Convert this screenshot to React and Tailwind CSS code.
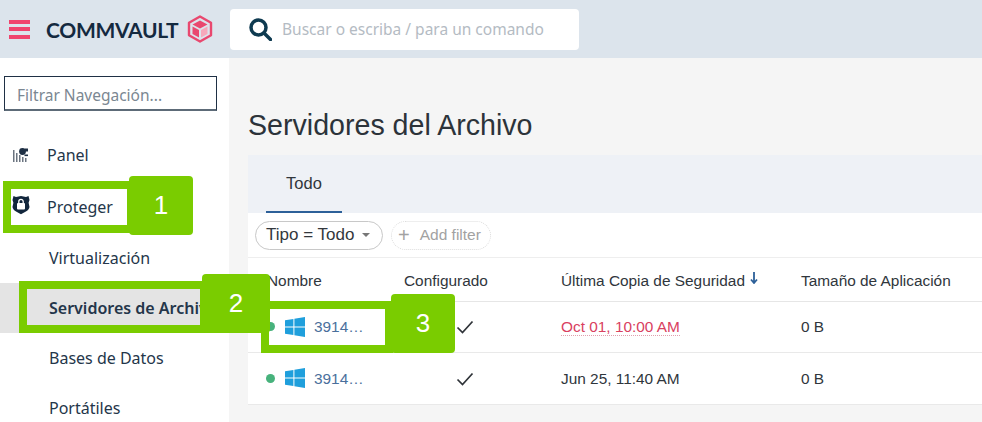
import React from 'react';

const rows = [
  { id: 1, name: '3914…', backup: 'Oct 01, 10:00 AM', size: '0 B', late: true },
  { id: 2, name: '3914…', backup: 'Jun 25, 11:40 AM', size: '0 B', late: false },
];

function CommvaultMark() {
  return (
    <svg width="26" height="28" viewBox="0 0 26 28" fill="none">
      <path d="M13 1.500 24 7.800v12.400L13 26.500 2 20.200V7.800z" stroke="#e9486f" strokeWidth="2.400" strokeLinejoin="round" />
      <path d="M13 5.500 20.500 9.500 13 13.500 5.500 9.500z" fill="#e9486f" />
      <path d="M5.500 11.500 12 15v7.500l-6.500-3.600z" fill="#e9486f" />
      <path d="M14 15l6.500-3.500v7.400L14 22.500z" fill="#f6a9bb" />
    </svg>
  );
}

function WindowsIcon() {
  return (
    <svg width="20" height="20" viewBox="0 0 20 20" fill="#1f9fdc">
      <path d="M0 3.200 8.400 2v7.400H0zM9.400 1.800 20 0v9.400H9.400zM0 10.500h8.400V18L0 16.800zM9.400 10.500H20V20L9.400 18.200z" />
    </svg>
  );
}

function CheckIcon() {
  return (
    <svg width="18" height="14" viewBox="0 0 18 14" fill="none" stroke="#2f3338" strokeWidth="1.700">
      <path d="M1.500 7.500 6.500 12.500 16.500 1.500" />
    </svg>
  );
}

function PanelIcon() {
  return (
    <svg width="16" height="16" viewBox="0 0 16 16" fill="#6b7480">
      <path d="M0 3h1.500v12H0zM3 6h1.500v9H3zM6 8h1.500v7H6zM9 10h1.500v5H9zM12 11h1.500v4H12z" />
      <circle cx="9.500" cy="4.500" r="3.400" fill="#1f3045" />
      <path d="M12 1.500h3v3h-3z" fill="#1f3045" />
      <path d="M11.500 7.500h3.500v1.600h-3.500z" fill="#1f3045" />
    </svg>
  );
}

function ShieldIcon() {
  return (
    <svg width="18" height="20" viewBox="0 0 18 20">
      <path d="M1.500 1 4 2 9 1l5 1 2.500-1 1 4-.9 2.700.9 4.300c-.6 3.600-5 5.400-8.500 7.200C5.500 17.400 1.100 15.600.5 12l.9-4.300L.5 5z" fill="#12263c" />
      <rect x="5" y="8" width="8" height="6.500" rx="1" fill="#fff" />
      <path d="M6.800 8V6.500a2.200 2.200 0 0 1 4.400 0V8" fill="none" stroke="#fff" strokeWidth="1.300" />
    </svg>
  );
}

function SortArrow() {
  return (
    <svg width="8" height="12" viewBox="0 0 8 12" fill="none" stroke="#2d6099" strokeWidth="1.800">
      <path d="M4 0v10M1 7.500 4 11l3-3.500" />
    </svg>
  );
}

// green tutorial marker, lies over the page
function Marker({ frameClass, boxClass, label }) {
  return (
    <>
      <div className={`absolute border-[8px] border-[#7acc00] ${frameClass}`} />
      <div className={`absolute flex items-center justify-center rounded-sm bg-[#7acc00] text-[26px] text-white font-['Liberation_Sans',sans-serif] ${boxClass}`}>
        {label}
      </div>
    </>
  );
}

export default function App() {
  return (
    <div className="relative flex h-[422px] w-[982px] flex-col overflow-hidden bg-[#f5f5f5] font-['Liberation_Sans',sans-serif]">
      <header className="flex h-[58px] shrink-0 items-center bg-[#dce4ec]">
        <div className="flex w-[230px] shrink-0 items-center pl-[9px]">
          <div className="flex w-[21px] flex-col gap-[3.500px]">
            <span className="h-[4px] bg-[#f0446e]" />
            <span className="h-[4px] bg-[#f0446e]" />
            <span className="h-[4px] bg-[#f0446e]" />
          </div>
          <span className="ml-[16px] font-['Lato',sans-serif] text-[21px] font-bold leading-none tracking-[-0.300px] text-[#14293f]">COMMVAULT</span>
          <span className="ml-[9px]"><CommvaultMark /></span>
        </div>
        <div className="flex h-[41px] w-[349px] items-center rounded-sm bg-white pl-[19px]">
          <svg width="23" height="23" viewBox="0 0 23 23" fill="none" stroke="#0e3a50" strokeWidth="3.500">
            <circle cx="9.500" cy="9.500" r="7.500" />
            <path d="M15 15l6.500 6.500" strokeLinecap="round" />
          </svg>
          <span className="ml-[10px] pt-[2px] font-['Noto_Sans',sans-serif] text-[15.500px] text-[#b4bbc3]">Buscar o escriba / para un comando</span>
        </div>
      </header>

      <div className="flex min-h-0 flex-1">
        <aside className="w-[229px] shrink-0 bg-white font-['Noto_Sans',sans-serif] text-[#24364a]">
          <div className="px-[4px] pt-[18px]">
            <div className="flex h-[35px] w-[213px] items-center border border-b-2 border-[#1f3045] border-b-[#5d6b78] pl-[12px] pt-[5px] text-[15.500px] text-[#7b8792]">
              Filtrar Navegación...
            </div>
          </div>
          <nav className="mt-[18px] text-[16px]">
            <div className="flex h-[52px] items-center pl-[13px]">
              <span className="w-[34px]"><PanelIcon /></span>Panel
            </div>
            <div className="flex h-[52px] items-center pl-[12px]">
              <span className="w-[35px] -translate-y-[2px]"><ShieldIcon /></span>Proteger
            </div>
            <div className="flex h-[50px] items-center pl-[49px]">Virtualización</div>
            <div className="flex h-[50px] items-center bg-[#e4e4e4] pl-[49px] font-semibold whitespace-nowrap">Servidores de Archivo</div>
            <div className="flex h-[50px] items-center pl-[49px]">Bases de Datos</div>
            <div className="h-[39px] pl-[49px] pt-[17px] leading-none">Portátiles</div>
          </nav>
        </aside>

        <main className="min-w-0 flex-1 pl-[19px]">
          <h1 className="mt-[51px] h-[46px] text-[28.600px] leading-[33px] whitespace-nowrap text-[#2c333a]">Servidores del Archivo</h1>
          <section className="bg-white">
            <div className="flex h-[58px] bg-[#eef1f6] pl-[18px]">
              <div className="flex w-[76px] items-center justify-center border-b-2 border-[#2d6099] text-[16.500px] text-[#30363c]">Todo</div>
            </div>
            <div className="flex h-[45px] items-center gap-[8px] border-b border-[#eeeeee] pl-[7px] text-[17px]">
              <div className="flex h-[29px] w-[128px] items-center rounded-full border border-[#c8c8c8] pl-[10px] text-[#33383d]">
                Tipo = Todo
                <span className="ml-[8px] h-0 w-0 border-x-[4px] border-t-[4px] border-x-transparent border-t-[#777]" />
              </div>
              <div className="flex h-[29px] w-[100px] items-center rounded-full border border-dotted border-[#ddd] pl-[6px] text-[#a2a2a2]">
                <span className="mr-[10px] text-[20px] leading-none font-light">+</span>
                <span className="text-[15.500px]">Add filter</span>
              </div>
            </div>
            <div className="flex h-[44px] items-center border-b border-[#e6e6e6] pt-[2px] text-[15.400px] text-[#30363c]">
              <div className="w-[156px] shrink-0 pl-[19px]">Nombre</div>
              <div className="w-[157px] shrink-0">Configurado</div>
              <div className="flex w-[240px] shrink-0 items-center">
                Última Copia de Seguridad
                <span className="ml-[5px] -translate-y-[2px]"><SortArrow /></span>
              </div>
              <div className="whitespace-nowrap">Tamaño de Aplicación</div>
            </div>
            {rows.map((row) => (
              <div key={row.id} className="flex h-[51px] items-center border-b border-[#e9e9e9] text-[15.400px] text-[#30363c] last:h-[52px]">
                <div className="flex w-[156px] shrink-0 items-center pl-[18px]">
                  <span className="h-[9px] w-[9px] rounded-full bg-[#47b27c]" />
                  <span className="ml-[10px]"><WindowsIcon /></span>
                  <span className="ml-[9px] text-[#4a6f9c]">{row.name}</span>
                </div>
                <div className="w-[157px] shrink-0 pl-[52px]"><CheckIcon /></div>
                <div className="w-[240px] shrink-0">
                  {row.late ? (
                    <span className="border-b border-dotted border-[#e0a0ae] text-[#d9415f]">{row.backup}</span>
                  ) : (
                    row.backup
                  )}
                </div>
                <div>{row.size}</div>
              </div>
            ))}
          </section>
        </main>
      </div>

      <Marker label="1" frameClass="left-[3px] top-[181px] h-[52px] w-[132px]" boxClass="left-[129px] top-[176px] h-[59px] w-[64px]" />
      <Marker label="2" frameClass="left-[19px] top-[281px] h-[52px] w-[189px]" boxClass="left-[202px] top-[274px] h-[59px] w-[68px]" />
      <Marker label="3" frameClass="left-[261px] top-[301px] h-[52px] w-[132px]" boxClass="left-[391px] top-[294px] h-[59px] w-[64px]" />
    </div>
  );
}
